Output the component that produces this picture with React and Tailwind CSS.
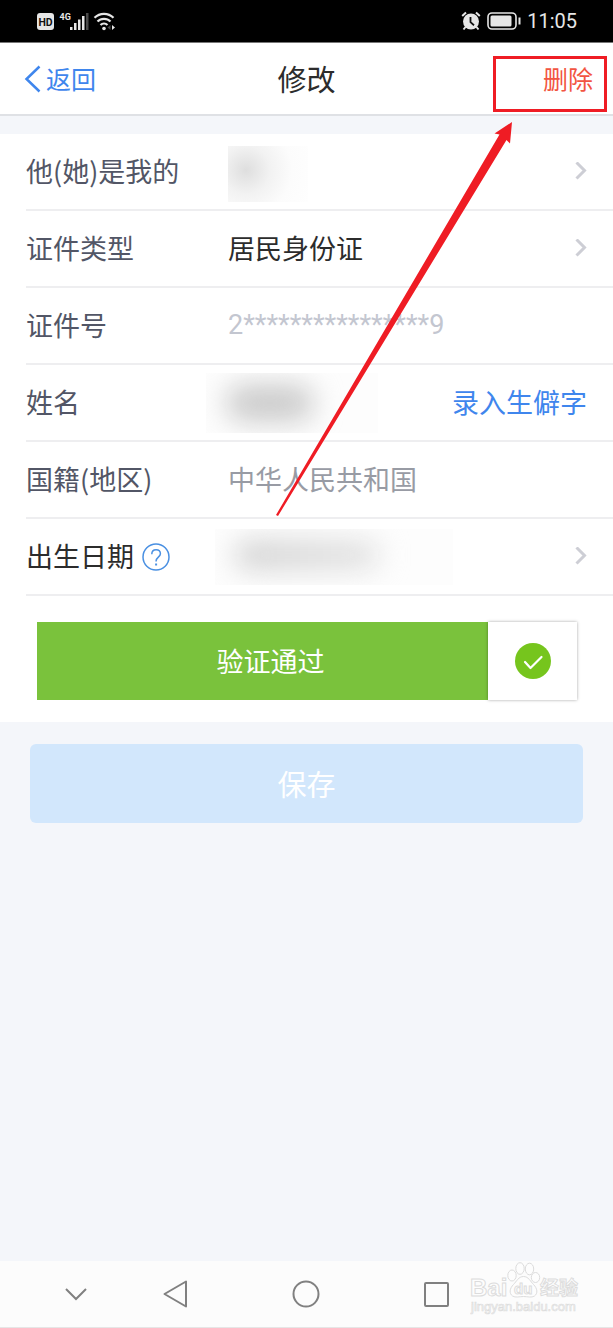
import React, { useState } from "react";

const Chevron = () => (
  <svg
    className="h-5 w-3 shrink-0 text-[#cdced5] pointer-events-none"
    viewBox="0 0 12 20"
    fill="none"
    stroke="currentColor"
    strokeWidth="3"
  >
    <path d="M1.500 0.500L9.500 8.500L1.500 16.500" />
  </svg>
);

const Row = ({ id, label, dark, help, children }) => (
  <div className="ml-[26px] flex h-[77px] items-center border-b-2 border-[#eeeef0] pr-[26px]">
    <div className="flex w-[202px] shrink-0 items-center gap-2">
      <label
        htmlFor={id}
        className={dark ? "text-[27px] text-[#2c2c2c]" : "text-[27px] text-[#525666]"}
      >
        {label}
      </label>
      {help}
    </div>
    <div className="flex min-w-0 flex-1 items-center justify-between">
      {children}
    </div>
  </div>
);

const StatusBar = () => (
  <div className="flex h-[43px] items-center justify-between border-b border-[#777] bg-black pl-[37px] pr-9 text-[#e6e6e6]">
    <svg className="h-[26px] w-[80px]" viewBox="0 0 80 26">
      <rect x="0" y="5" width="17" height="17" rx="3" fill="#e6e6e6" />
      <text x="8.500" y="17.500" fontSize="10.500" fontWeight="700" fontFamily="Roboto, sans-serif" textAnchor="middle" fill="#111">
        HD
      </text>
      <text x="22.500" y="12" fontSize="9" fontWeight="700" fontFamily="Roboto, sans-serif" fill="#e6e6e6">
        4G
      </text>
      <g fill="#e6e6e6">
        <rect x="33" y="19" width="2.500" height="3" />
        <rect x="37" y="15" width="2.500" height="7" />
        <rect x="41" y="11.500" width="2.500" height="10.500" />
        <rect x="45" y="8" width="2.500" height="14" />
        <rect x="49" y="5" width="2.500" height="17" fill="#4a4a4a" />
      </g>
      <g fill="none" stroke="#e6e6e6" strokeWidth="2.200">
        <path d="M57.500 9.800A13.500 13.500 0 0 1 76.500 9.800" />
        <path d="M60.500 13.600A9 9 0 0 1 73.500 13.600" />
        <path d="M63.500 17A5 5 0 0 1 70.500 17" />
      </g>
      <circle cx="67" cy="20.500" r="1.800" fill="#e6e6e6" />
      <path d="M75 17l3 2.500-3 2.500z" fill="#e6e6e6" />
      <path d="M73.500 17l-3 2.500 3 2.500z" fill="#444" />
    </svg>
    <div className="flex items-center gap-1.5">
      <svg className="h-5 w-5" viewBox="0 0 20 20">
        <circle cx="10" cy="10.500" r="8" fill="#e6e6e6" />
        <path d="M1.200 5L5 1.500M18.800 5L15 1.500M4.500 16l-2 2.500M15.500 16l2 2.500" stroke="#e6e6e6" strokeWidth="2" />
        <path d="M9.500 6v5.200l3.500 3" fill="none" stroke="#111" strokeWidth="1.800" />
      </svg>
      <svg className="h-5 w-[34px]" viewBox="0 0 34 20">
        <rect x="1" y="2" width="28" height="16" rx="4" fill="none" stroke="#e6e6e6" strokeWidth="1.600" />
        <rect x="3.500" y="4.500" width="21" height="11" rx="1.500" fill="#e6e6e6" />
        <path d="M32.500 6.500v7" stroke="#e6e6e6" strokeWidth="2" />
      </svg>
      <time className="font-[Roboto,sans-serif] text-xl">11:05</time>
    </div>
  </div>
);

const Watermark = () => (
  <div className="pointer-events-none absolute right-[33px] top-0">
    <svg className="h-[54px] w-[110px]" viewBox="0 0 110 54" fill="#fdfdfd" stroke="#dcdcdc" strokeWidth="1">
      <g fontFamily="'Liberation Sans', 'Noto Sans CJK SC', sans-serif" fontWeight="700">
        <text x="0" y="35" fontSize="24">Bai</text>
        <ellipse cx="42" cy="14.500" rx="4.200" ry="5.500" />
        <ellipse cx="50" cy="7.500" rx="4.200" ry="5.800" />
        <ellipse cx="59.500" cy="8" rx="4.200" ry="5.800" />
        <ellipse cx="65.500" cy="16.500" rx="4.200" ry="5" />
        <path d="M53.500 15.500c5 0 7 5 10 8 4 4 4.500 9 1 11.500-3 2-7 .5-11 .5s-8 1.500-11-.5c-3.500-2.500-3-7.500 1-11.500 3-3 5-8 10-8z" />
        <text x="44" y="33" fontSize="15">du</text>
        <text x="70" y="34" fontSize="19">经验</text>
      </g>
      <text x="1" y="50" fontSize="13" fontFamily="'Liberation Sans', sans-serif" strokeWidth="0.700">jingyan.baidu.com</text>
    </svg>
  </div>
);

const App = () => {
  const [docType, setDocType] = useState("居民身份证");

  return (
    <div className="relative flex min-h-screen flex-col bg-[#f4f6fa] font-['Noto_Sans_CJK_SC',sans-serif] leading-normal">
      <StatusBar />

      <header className="grid h-[73px] grid-cols-3 items-center border-b-2 border-[#dfe1e5] bg-white px-5">
        <button className="flex items-center gap-1 justify-self-start pl-1 text-[25px] text-[#3f86ed]">
          <svg className="h-7 w-[18px]" viewBox="0 0 18 28" fill="none" stroke="currentColor" strokeWidth="2.500">
            <path d="M15.500 1.500L2.500 14L15.500 26.500" />
          </svg>
          返回
        </button>
        <h1 className="justify-self-center text-[29px] text-[#2c2c2c]">修改</h1>
        <div className="relative justify-self-end">
          <button className="block text-[25px] text-[#f25542]">删除</button>
          {/* Highlight around the delete action */}
          <div className="pointer-events-none absolute -right-3.5 -top-1 h-14 w-[114px] border-[3px] border-[#ef1c24]" />
        </div>
      </header>

      <form className="mt-[18px] bg-white pb-[22px]" onSubmit={(e) => e.preventDefault()}>
        <Row id="relation" label="他(她)是我的">
          <button id="relation" type="button" className="flex w-full items-center justify-between">
            <span className="mt-1 h-14 w-20 bg-[radial-gradient(circle_at_18px_24px,#dedede,#f2f2f2_24px,#fcfcfc_46px,#fefefe)]" />
            <Chevron />
          </button>
        </Row>

        <Row id="docType" label="证件类型">
          <select
            id="docType"
            value={docType}
            onChange={(e) => setDocType(e.target.value)}
            className="w-full appearance-none bg-transparent text-[27px] text-[#2c2c2c] outline-none"
          >
            <option>居民身份证</option>
          </select>
          <Chevron />
        </Row>

        <Row id="docNo" label="证件号">
          <input
            id="docNo"
            readOnly
            value="2****************9"
            className="w-full bg-transparent font-[Roboto,sans-serif] text-[27px] text-[#c3c6d0] outline-none"
          />
        </Row>

        <Row id="name" label="姓名">
          {/* Private values stay blurred */}
          <div className="-ml-[22px] h-[60px] w-[172px] shrink-0 overflow-hidden bg-[#fdfdfd]">
            <input
              id="name"
              readOnly
              className="ml-5 mt-3 block h-9 w-[88px] rounded-full bg-[#c9c9c9] blur-[14px]"
            />
          </div>
          <a href="#rare" className="shrink-0 text-[27px] text-[#3f86ed]">
            录入生僻字
          </a>
        </Row>

        <Row id="country" label="国籍(地区)">
          <input
            id="country"
            readOnly
            value="中华人民共和国"
            className="w-full bg-transparent text-[27px] text-[#989ba4] outline-none"
          />
        </Row>

        <Row
          id="birthday"
          label="出生日期"
          dark
          help={
            <button type="button" aria-label="?">
              <svg className="h-7 w-7 text-[#4a90e2]" viewBox="0 0 28 28" fill="none" stroke="currentColor" strokeWidth="1.500">
                <circle cx="14" cy="14" r="13" />
                <path d="M9.800 11.200c0-2.600 1.800-4.400 4.300-4.400s4.300 1.700 4.300 4c0 3.200-4.300 3.600-4.300 7.200v.6" />
                <path d="M14.100 20.500v2" strokeWidth="2" />
              </svg>
            </button>
          }
        >
          <div className="-ml-[13px] h-14 w-[238px] overflow-hidden bg-[#fdfdfd]">
            <input
              id="birthday"
              readOnly
              className="ml-5 mt-3 block h-7 w-[145px] rounded-full bg-gradient-to-r from-[#cfcfcf] to-[#e2e2e2] blur-[14px]"
            />
          </div>
          <Chevron />
        </Row>

        <div className="ml-[37px] mr-9 mt-[26px] flex h-[78px]">
          <div className="flex flex-1 items-center justify-center bg-[#7ac23c] pl-4 text-[27px] text-white">
            验证通过
          </div>
          <div className="flex w-[89px] items-center justify-center bg-white shadow-[0_0_3px_rgba(0,0,0,0.35)]">
            <svg className="h-9 w-9" viewBox="0 0 36 36" fill="none">
              <circle cx="18" cy="18" r="18" fill="#76c51d" />
              <path d="M10 19l5.500 6L26.500 14" stroke="#fff" strokeWidth="2.200" strokeLinecap="round" strokeLinejoin="round" />
            </svg>
          </div>
        </div>
      </form>

      <button className="mx-[30px] mt-[22px] h-[79px] rounded-md bg-[#d2e7fc] text-[29px] text-white">
        保存
      </button>

      <nav className="relative mt-auto flex h-[67px] items-center gap-[68px] border-b border-[#e6e6e6] bg-[#fcfcfc] pl-[60px] text-[#808080]">
        <button aria-label="收起">
          <svg className="h-8 w-8" viewBox="0 0 32 32" fill="none" stroke="currentColor" strokeWidth="2">
            <path d="M6 11l10 10 10-10" />
          </svg>
        </button>
        <div className="flex gap-[98px]">
          <button aria-label="返回">
            <svg className="h-8 w-8" viewBox="0 0 32 32" fill="none" stroke="currentColor" strokeWidth="2" strokeLinejoin="round">
              <path d="M4.500 16L26 3.500V28.500Z" />
            </svg>
          </button>
          <button aria-label="主页">
            <svg className="h-8 w-8" viewBox="0 0 32 32" fill="none" stroke="currentColor" strokeWidth="2">
              <circle cx="16" cy="16" r="12.500" />
            </svg>
          </button>
          <button aria-label="最近">
            <svg className="h-8 w-8" viewBox="0 0 32 32" fill="none" stroke="currentColor" strokeWidth="2">
              <rect x="5" y="5" width="23" height="23" rx="1" />
            </svg>
          </button>
        </div>
        <Watermark />
      </nav>

      {/* Arrow pointing to the delete action */}
      <svg className="pointer-events-none absolute right-[100px] top-[121px] h-[396px] w-[238px]" viewBox="275 121 238 396">
        <path d="M276 515L499.500 134.500L494.500 133.500L512 122L510 143.500L506.500 140L278 516Z" fill="#ef1c24" />
      </svg>
    </div>
  );
};

export default App;
